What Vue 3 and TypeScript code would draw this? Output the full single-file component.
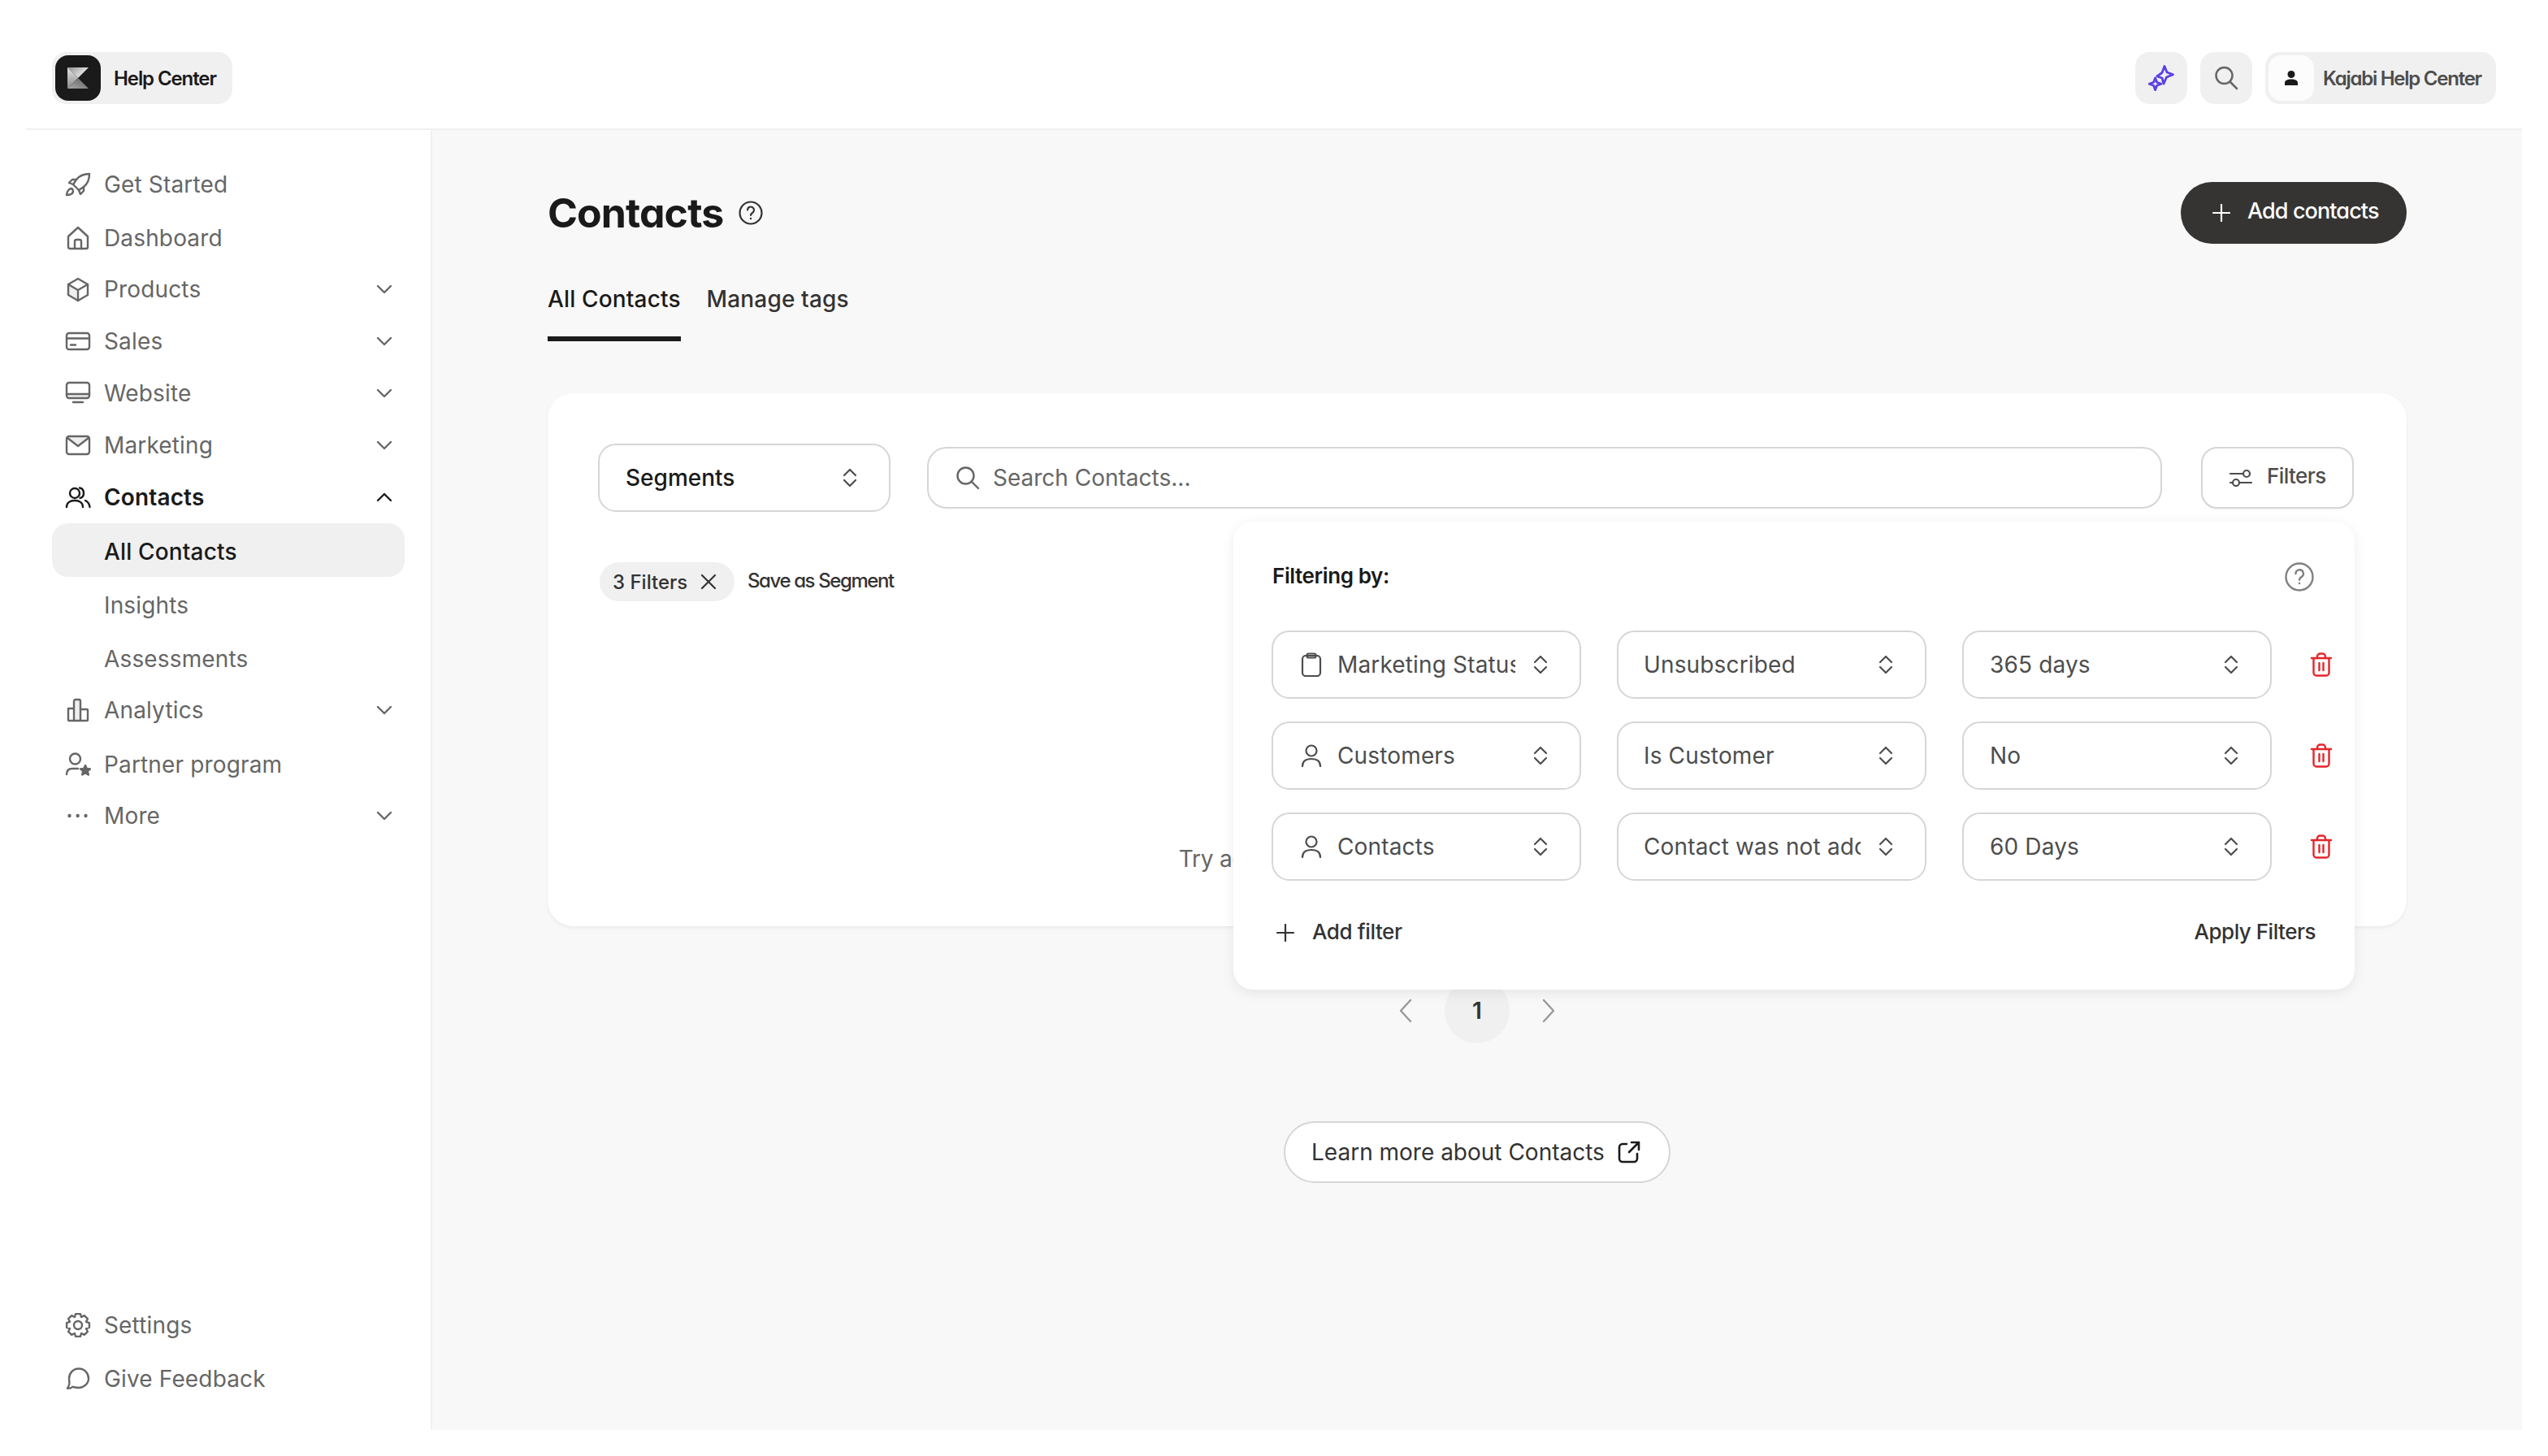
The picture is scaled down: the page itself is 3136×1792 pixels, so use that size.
<script setup lang="ts">
type P = { d: string; fill?: boolean; shade?: boolean }
function gear(): string {
  const c = 16
  const teeth = 8
  let d = ''
  for (let i = 0; i < teeth; i++) {
    const a = (i / teeth) * Math.PI * 2 - Math.PI / 2
    const step = Math.PI / teeth
    const pts: [number, number][] = [
      [10.8, a - step * 0.98],
      [14.2, a - step * 0.52],
      [14.2, a + step * 0.52],
      [10.8, a + step * 0.98],
    ]
    pts.forEach(([r, t], j) => {
      const x = (c + r * Math.cos(t)).toFixed(2)
      const y = (c + r * Math.sin(t)).toFixed(2)
      d += `${i === 0 && j === 0 ? 'M' : 'L'}${x} ${y} `
    })
  }
  return d + 'Z'
}
const icons: Record<string, P[]> = {
  rocket: [
    { d: 'M30 3c-6 0-12 2-16 7l-4 6 7 7 6-4c5-4 7-10 7-16z' },
    { d: 'M14 10H9l-4 4 5 2M23 19v5l-4 4-2-5' },
    { d: 'M7 21c-3 1-5 5-5 8 3 0 7-1 8-4 0-2-1-4-3-4z' },
  ],
  home: [
    { d: 'M4 14 16 3l12 11v13a2 2 0 0 1-2 2H6a2 2 0 0 1-2-2z' },
    { d: 'M12 29V20a2 2 0 0 1 2-2h4a2 2 0 0 1 2 2v9' },
  ],
  cube: [
    { d: 'M4 10 16 17V30L4 23z', shade: true },
    { d: 'M16 3 28 10V23L16 30 4 23V10z' },
    { d: 'M4 10 16 17 28 10M16 17V30' },
  ],
  card: [
    { d: 'M5 6h22a3 3 0 0 1 3 3v14a3 3 0 0 1-3 3H5a3 3 0 0 1-3-3V9a3 3 0 0 1 3-3z' },
    { d: 'M2 12.5H30M7 20.5H13' },
  ],
  monitor: [
    { d: 'M2 17H30V19a3 3 0 0 1-3 3H5a3 3 0 0 1-3-3z', shade: true },
    { d: 'M5 3h22a3 3 0 0 1 3 3v13a3 3 0 0 1-3 3H5a3 3 0 0 1-3-3V6a3 3 0 0 1 3-3z' },
    { d: 'M2 17H30M10 27H22' },
  ],
  mail: [
    { d: 'M3 6H29L16 17z', shade: true },
    { d: 'M5 5h22a3 3 0 0 1 3 3v16a3 3 0 0 1-3 3H5a3 3 0 0 1-3-3V8a3 3 0 0 1 3-3z' },
    { d: 'M3 7 16 17 29 7' },
  ],
  people: [
    { d: 'M18 11a6 6 0 1 1-12 0 6 6 0 0 1 12 0z' },
    { d: 'M2 28c0-5 4-8 10-8s10 3 10 8' },
    { d: 'M18 4.5c3 .5 5 3 5 6.5s-2 5.500-4.500 6M25 20c3 1.500 5 4 5.500 8' },
  ],
  bars: [
    { d: 'M11 5a2 2 0 0 1 2-2h4a2 2 0 0 1 2 2v24h-8z', shade: true },
    { d: 'M4 14h7v15H5a1 1 0 0 1-1-1zM11 5a2 2 0 0 1 2-2h4a2 2 0 0 1 2 2v24h-8zM19 15h8a1 1 0 0 1 1 1v12a1 1 0 0 1-1 1h-8z' },
  ],
  partner: [
    { d: 'M19 9a6.500 6.500 0 1 1-13 0 6.500 6.500 0 0 1 13 0z' },
    { d: 'M2 28c0-5 3-7 7-7h7' },
    { d: 'M25 17l1.800 4 4.200.4-3.200 2.800 1 4.300-3.800-2.300-3.800 2.300 1-4.300-3.200-2.800 4.200-.4z', fill: true },
  ],
  gear: [{ d: gear() }, { d: 'M21 16a5 5 0 1 1-10 0 5 5 0 0 1 10 0z' }],
  chat: [
    { d: 'M17 3.500C24 3.500 29 9 29 15.500 29 22 23 27 17 27c-2.500 0-5-.5-7-1.200C8 27 5 28 3 27.800 4.500 25.500 5.500 23 5.500 20.500 5 19 5 17 5 15.500 5 9 10 3.500 17 3.500z' },
  ],
}
const dots = [5.5, 15.7, 25.5]
interface Nav {
  label: string
  icon?: string
  chev?: 'down' | 'up'
  cls?: string
}
const nav: Nav[] = [
  { label: 'Get Started', icon: 'rocket', cls: 'tall' },
  { label: 'Dashboard', icon: 'home', cls: 'tall' },
  { label: 'Products', icon: 'cube', chev: 'down' },
  { label: 'Sales', icon: 'card', chev: 'down' },
  { label: 'Website', icon: 'monitor', chev: 'down' },
  { label: 'Marketing', icon: 'mail', chev: 'down' },
  { label: 'Contacts', icon: 'people', chev: 'up', cls: 'open' },
  { label: 'All Contacts', cls: 'tall sub current' },
  { label: 'Insights', cls: 'tall sub' },
  { label: 'Assessments', cls: 'tall sub' },
  { label: 'Analytics', icon: 'bars', chev: 'down' },
  { label: 'Partner program', icon: 'partner', cls: 'tall' },
  { label: 'More', icon: 'dots', chev: 'down' },
]
const foot: Nav[] = [
  { label: 'Settings', icon: 'gear', cls: 'tall' },
  { label: 'Give Feedback', icon: 'chat', cls: 'tall' },
]
const rows = [
  { icon: 'clip', a: 'Marketing Status', b: 'Unsubscribed', c: '365 days' },
  { icon: 'user', a: 'Customers', b: 'Is Customer', c: 'No' },
  { icon: 'user', a: 'Contacts', b: 'Contact was not added', c: '60 Days' },
]
</script>

<template>
  <div class="page">
    <header class="top">
      <div class="brand">
        <span class="logo">
          <svg width="26" height="26" viewBox="0 0 26 26">
            <defs>
              <linearGradient id="lgA" x1="0" y1="0" x2="1" y2="0.5">
                <stop offset="0" stop-color="#8f8f8f" />
                <stop offset="1" stop-color="#f2f2f2" />
              </linearGradient>
              <linearGradient id="lgB" x1="0" y1="0" x2="0" y2="1">
                <stop offset="0" stop-color="#e4e4e4" />
                <stop offset="1" stop-color="#8a8a8a" />
              </linearGradient>
              <linearGradient id="lgC" x1="0" y1="1" x2="1" y2="0">
                <stop offset="0" stop-color="#a8a8a8" />
                <stop offset="1" stop-color="#5e5e5e" />
              </linearGradient>
            </defs>
            <path d="M0 0H26L13 13z" fill="url(#lgA)" />
            <path d="M0 0 13 13 0 26z" fill="url(#lgB)" />
            <path d="M0 26 13 13 26 26z" fill="url(#lgC)" />
          </svg>
        </span>
        <span class="brand-name kj">Help Center</span>
      </div>
      <div class="top-right">
        <button class="sq">
          <svg width="32" height="32" viewBox="0 0 32 32" fill="none" stroke="#5b3fe6" stroke-width="2.800" stroke-linejoin="round">
            <path d="M20 1.500 23 9 30.500 11.700 22.500 15 19 23 17 16 10.800 14 17 9.500z" />
            <path d="M8.600 16 10.600 21.300 16 23.300 10.600 25.300 8.600 30.700 6.600 25.300 1.200 23.300 6.600 21.300z" />
          </svg>
        </button>
        <button class="sq">
          <svg width="32" height="32" viewBox="0 0 32 32" fill="none" stroke="#666" stroke-width="2.500" stroke-linecap="round">
            <circle cx="13.500" cy="13" r="10" />
            <path d="M21 21 29 29" />
          </svg>
        </button>
        <div class="user">
          <span class="avatar">
            <svg width="16" height="18" viewBox="0 0 16 18" fill="#1a1a1a">
              <circle cx="8" cy="4.500" r="4.500" />
              <path d="M0 18v-3c0-3 3-4.500 8-4.500s8 1.500 8 4.500v3z" />
            </svg>
          </span>
          <span class="user-name kj">Kajabi Help Center</span>
        </div>
      </div>
    </header>

    <div class="body">
      <aside class="side">
        <nav class="side-list">
          <a v-for="n in nav" :key="n.label" class="item" :class="n.cls">
            <svg v-if="n.icon" class="ico" width="32" height="32" viewBox="0 0 32 32" fill="none" stroke="currentColor" stroke-width="2.400" stroke-linecap="round" stroke-linejoin="round">
              <template v-if="n.icon === 'dots'">
                <circle v-for="x in dots" :key="x" :cx="x" cy="16" r="2.200" fill="currentColor" stroke="none" />
              </template>
              <template v-else>
                <path
                  v-for="(p, i) in icons[n.icon]"
                  :key="i"
                  :d="p.d"
                  :fill="p.fill ? 'currentColor' : p.shade ? '#eeeeee' : 'none'"
                  :stroke="p.shade ? 'none' : 'currentColor'"
                />
              </template>
            </svg>
            <span class="label">{{ n.label }}</span>
            <svg v-if="n.chev" class="chev" width="20" height="12" viewBox="0 0 20 12" fill="none" stroke="currentColor" stroke-width="2.400" stroke-linecap="round" stroke-linejoin="round">
              <path :d="n.chev === 'down' ? 'M2 2 10 10 18 2' : 'M2 10 10 2 18 10'" />
            </svg>
          </a>
        </nav>
        <nav class="side-foot">
          <a v-for="n in foot" :key="n.label" class="item" :class="n.cls">
            <svg class="ico" width="32" height="32" viewBox="0 0 32 32" fill="none" stroke="currentColor" stroke-width="2.400" stroke-linecap="round" stroke-linejoin="round">
              <path v-for="(p, i) in icons[n.icon as string]" :key="i" :d="p.d" />
            </svg>
            <span class="label">{{ n.label }}</span>
          </a>
        </nav>
      </aside>

      <main class="main">
        <div class="title-row">
          <div class="title-wrap">
            <h1 class="title kj">Contacts</h1>
            <svg width="32" height="32" viewBox="0 0 32 32" fill="none" stroke="#333" stroke-width="2.200" stroke-linecap="round">
              <circle cx="16" cy="16" r="13.500" />
              <path d="M12 12.500a4 4 0 1 1 6 3.500c-1.300.8-2 1.400-2 3" />
              <circle cx="16" cy="23" r="1.200" fill="#333" stroke="none" />
            </svg>
          </div>
          <button class="add">
            <svg width="22" height="22" viewBox="0 0 22 22" stroke="#fff" stroke-width="2.200" stroke-linecap="round">
              <path d="M11 1V21M1 11H21" />
            </svg>
            <span class="kj">Add contacts</span>
          </button>
        </div>

        <div class="tabs">
          <span class="tab active">All Contacts</span>
          <span class="tab">Manage tags</span>
        </div>

        <section class="card">
          <div class="toolbar">
            <div class="select seg">
              <span class="sel-text dark">Segments</span>
              <svg width="18" height="24" viewBox="0 0 18 24" fill="none" stroke="#4d4d4d" stroke-width="2.200" stroke-linecap="round" stroke-linejoin="round">
                <path d="M2 9 9 2 16 9M2 15 9 22 16 15" />
              </svg>
            </div>
            <div class="search">
              <svg width="30" height="30" viewBox="0 0 30 30" fill="none" stroke="#666" stroke-width="2.400" stroke-linecap="round">
                <circle cx="12.500" cy="12.500" r="10" />
                <path d="M20 20 28 28" />
              </svg>
              <span class="placeholder">Search Contacts...</span>
            </div>
            <button class="filters">
              <svg width="28" height="22" viewBox="0 0 28 22" fill="none" stroke="#4d4d4d" stroke-width="2.200" stroke-linecap="round">
                <path d="M1 6H16M1 17H4M13 17H27" />
                <circle cx="21" cy="6" r="4" />
                <circle cx="8" cy="17" r="4" />
              </svg>
              <span class="kj">Filters</span>
            </button>
          </div>

          <div class="chips">
            <span class="chip">
              <span class="kj">3 Filters</span>
              <svg width="20" height="20" viewBox="0 0 20 20" stroke="#333" stroke-width="2.200" stroke-linecap="round">
                <path d="M2 2 18 18M18 2 2 18" />
              </svg>
            </span>
            <span class="save kj">Save as Segment</span>
          </div>

          <p class="empty">Try adjusting your search or filters to find your contacts.</p>

          <div class="pop">
            <div class="pop-head">
              <span class="pop-title kj">Filtering by:</span>
              <svg class="pop-help" width="38" height="38" viewBox="0 0 38 38" fill="none" stroke="#808080" stroke-width="2.400" stroke-linecap="round">
                <circle cx="19" cy="19" r="16.500" />
                <path d="M14.500 15a4.700 4.700 0 1 1 7 4.100c-1.500.9-2.500 1.500-2.500 3.400" />
                <circle cx="19" cy="27" r="1.300" fill="#808080" stroke="none" />
              </svg>
            </div>
            <div class="rows">
              <div v-for="r in rows" :key="r.a" class="row">
                <div class="select field">
                  <svg v-if="r.icon === 'clip'" class="f-ico" width="26" height="30" viewBox="0 0 26 30" fill="none" stroke="#4d4d4d" stroke-width="2.200" stroke-linejoin="round">
                    <rect x="2" y="4" width="22" height="25" rx="4" />
                    <rect x="7.500" y="1.500" width="11" height="5" rx="2" />
                  </svg>
                  <svg v-else class="f-ico" width="26" height="28" viewBox="0 0 26 28" fill="none" stroke="#4d4d4d" stroke-width="2.200" stroke-linecap="round">
                    <circle cx="13" cy="8" r="6.500" />
                    <path d="M2 27c0-6 4-9 11-9s11 3 11 9" />
                  </svg>
                  <span class="sel-text clip">{{ r.a }}</span>
                  <svg class="ud" width="18" height="24" viewBox="0 0 18 24" fill="none" stroke="#4d4d4d" stroke-width="2.200" stroke-linecap="round" stroke-linejoin="round">
                    <path d="M2 9 9 2 16 9M2 15 9 22 16 15" />
                  </svg>
                </div>
                <div class="select field">
                  <span class="sel-text clip">{{ r.b }}</span>
                  <svg class="ud" width="18" height="24" viewBox="0 0 18 24" fill="none" stroke="#4d4d4d" stroke-width="2.200" stroke-linecap="round" stroke-linejoin="round">
                    <path d="M2 9 9 2 16 9M2 15 9 22 16 15" />
                  </svg>
                </div>
                <div class="select field last">
                  <span class="sel-text clip">{{ r.c }}</span>
                  <svg class="ud" width="18" height="24" viewBox="0 0 18 24" fill="none" stroke="#4d4d4d" stroke-width="2.200" stroke-linecap="round" stroke-linejoin="round">
                    <path d="M2 9 9 2 16 9M2 15 9 22 16 15" />
                  </svg>
                </div>
                <svg class="trash" width="28" height="30" viewBox="0 0 28 30" fill="none" stroke="#e5252a" stroke-width="2.400" stroke-linecap="round" stroke-linejoin="round">
                  <path d="M2 7H26M4.500 7V25a3.500 3.500 0 0 0 3.500 3.500H20a3.500 3.500 0 0 0 3.500-3.500V7" />
                  <path d="M9 7V5a3.500 3.500 0 0 1 3.500-3.500h3A3.500 3.500 0 0 1 19 5v2" />
                  <path d="M11.500 13V22M16.500 13V22" />
                </svg>
              </div>
            </div>
            <div class="pop-foot">
              <span class="add-filter">
                <svg width="22" height="22" viewBox="0 0 22 22" stroke="#333" stroke-width="2.200" stroke-linecap="round">
                  <path d="M11 1V21M1 11H21" />
                </svg>
                <span class="kj">Add filter</span>
              </span>
              <span class="apply kj">Apply Filters</span>
            </div>
          </div>
        </section>

        <div class="pager">
          <svg width="16" height="30" viewBox="0 0 16 30" fill="none" stroke="#999" stroke-width="2.400" stroke-linecap="round" stroke-linejoin="round">
            <path d="M14 2 2 15 14 28" />
          </svg>
          <span class="page-no">1</span>
          <svg width="16" height="30" viewBox="0 0 16 30" fill="none" stroke="#999" stroke-width="2.400" stroke-linecap="round" stroke-linejoin="round">
            <path d="M2 2 14 15 2 28" />
          </svg>
        </div>

        <div class="learn-wrap">
          <a class="learn">
            <span>Learn more about Contacts</span>
            <svg width="28" height="28" viewBox="0 0 28 28" fill="none" stroke="#1a1a1a" stroke-width="2.600" stroke-linecap="round" stroke-linejoin="round">
              <path d="M11 4H6a4 4 0 0 0-4 4v14a4 4 0 0 0 4 4h14a4 4 0 0 0 4-4v-6" />
              <path d="M14 14 26 2M17 2H26V11" />
            </svg>
          </a>
        </div>
      </main>
    </div>
  </div>
</template>

<style>
html,
body {
  margin: 0;
  background: #fff;
}
</style>

<style scoped>
.page {
  box-sizing: border-box;
  width: 3136px;
  height: 1792px;
  padding: 0 32px 32px;
  display: flex;
  flex-direction: column;
  font-family: Inter, "Liberation Sans", sans-serif;
  color: #1a1a1a;
  overflow: hidden;
}
.kj {
  font-feature-settings: "cv11" 1;
}
.top {
  flex: none;
  box-sizing: border-box;
  height: 160px;
  border-bottom: 2px solid #f0f0f0;
  padding: 64px 32px 0;
  display: flex;
  align-items: flex-start;
  justify-content: space-between;
}
.brand {
  width: 222px;
  height: 64px;
  box-sizing: border-box;
  padding: 4px;
  background: #f0f0f0;
  border-radius: 18px;
  display: flex;
  align-items: center;
  gap: 16px;
}
.logo {
  width: 56px;
  height: 56px;
  border-radius: 16px;
  background: #1a1a1a;
  display: flex;
  align-items: center;
  justify-content: center;
}
.brand-name {
  font-size: 24px;
  font-weight: 600;
  letter-spacing: -1.1px;
  white-space: nowrap;
}
.top-right {
  display: flex;
  gap: 16px;
}
.sq {
  width: 64px;
  height: 64px;
  border: 0;
  padding: 0;
  background: #f0f0f0;
  border-radius: 18px;
  display: flex;
  align-items: center;
  justify-content: center;
}
.user {
  height: 64px;
  width: 284px;
  box-sizing: border-box;
  padding: 4px;
  background: #f0f0f0;
  border-radius: 18px;
  display: flex;
  align-items: center;
  gap: 11px;
}
.avatar {
  width: 56px;
  height: 56px;
  background: #fcfcfc;
  border-radius: 16px;
  display: flex;
  align-items: center;
  justify-content: center;
}
.user-name {
  font-size: 24px;
  font-weight: 600;
  color: #4d4d4d;
  letter-spacing: -1.25px;
  white-space: nowrap;
}
.body {
  flex: 1;
  display: flex;
  min-height: 0;
}
.side {
  flex: none;
  width: 500px;
  box-sizing: border-box;
  border-right: 2px solid #f0f0f0;
  padding: 32px 32px 32px 32px;
  display: flex;
  flex-direction: column;
  justify-content: space-between;
}
.item {
  height: 64px;
  box-sizing: border-box;
  padding: 0 15px 0 16px;
  display: flex;
  align-items: center;
  font-size: 28px;
  letter-spacing: 0.15px;
  color: #666;
  border-radius: 20px;
  width: 434px;
}
.item.tall {
  height: 66px;
  padding-top: 3px;
}
.item.open {
  color: #1a1a1a;
  font-weight: 600;
}
.item.open .chev {
  color: #1a1a1a;
}
.item.sub {
  padding-left: 64px;
}
.item.current {
  background: #f0f0f0;
  color: #1a1a1a;
  font-weight: 500;
}
.ico {
  flex: none;
  margin-right: 16px;
}
.label {
  flex: 1;
  white-space: nowrap;
}
.chev {
  flex: none;
}
.main {
  flex: 1;
  background: #f8f8f8;
  padding: 64px 142px 0;
  min-width: 0;
  box-sizing: border-box;
}
.title-row {
  height: 76px;
  display: flex;
  align-items: center;
  justify-content: space-between;
}
.title-wrap {
  display: flex;
  align-items: center;
  gap: 18px;
}
.title {
  margin: 0;
  font-size: 50px;
  font-weight: 700;
  line-height: 76px;
  letter-spacing: -0.9px;
  color: #1a1a1a;
}
.add {
  width: 278px;
  height: 76px;
  border: 0;
  padding: 0 0 0 39px;
  background: #353433;
  border-radius: 38px;
  display: flex;
  align-items: center;
  gap: 21px;
  color: #fff;
  font: 500 27px Inter, sans-serif;
  letter-spacing: -0.9px;
}
.add span {
  position: relative;
  top: -3px;
}
.tabs {
  display: flex;
  gap: 32px;
  margin-top: 46px;
}
.tab {
  font-size: 28px;
  font-weight: 500;
  letter-spacing: 0.15px;
  line-height: 44px;
  padding-bottom: 24px;
  border-bottom: 6px solid transparent;
  color: #333;
}
.tab.active {
  color: #1a1a1a;
  border-bottom-color: #1a1a1a;
}
.card {
  position: relative;
  margin-top: 64px;
  box-sizing: border-box;
  height: 656px;
  background: #fff;
  border-radius: 32px;
  padding: 62px 65px 0 62px;
  box-shadow: 0 2px 4px rgba(0, 0, 0, 0.06);
}
.toolbar {
  display: flex;
  align-items: center;
}
.select {
  box-sizing: border-box;
  border: 2px solid #d6d6d6;
  background: #fff;
  border-radius: 22px;
  display: flex;
  align-items: center;
}
.seg {
  width: 360px;
  height: 84px;
  padding: 0 39px 0 32px;
  justify-content: space-between;
}
.sel-text {
  font-size: 28px;
  letter-spacing: 0.15px;
  color: #4d4d4d;
  white-space: nowrap;
}
.sel-text.dark {
  color: #1a1a1a;
  font-weight: 500;
  letter-spacing: 0;
}
.search {
  box-sizing: border-box;
  flex: 1;
  height: 76px;
  margin-left: 45px;
  border: 2px solid #d6d6d6;
  border-radius: 24px;
  background: #fff;
  padding: 0 0 0 33px;
  display: flex;
  align-items: center;
  gap: 16px;
}
.placeholder {
  font-size: 28px;
  color: #666;
}
.filters {
  box-sizing: border-box;
  width: 188px;
  height: 76px;
  margin-left: 48px;
  border: 2px solid #d6d6d6;
  border-radius: 20px;
  background: #fff;
  padding: 0 0 0 33px;
  display: flex;
  align-items: center;
  gap: 18px;
  font: 500 26px Inter, sans-serif;
  letter-spacing: -0.6px;
  color: #4d4d4d;
  box-shadow: 0 1px 2px rgba(0, 0, 0, 0.06);
}
.filters span {
  position: relative;
  top: -3px;
}
.chips {
  margin-top: 62px;
  margin-left: 2px;
  display: flex;
  align-items: center;
  gap: 16px;
}
.chip {
  box-sizing: border-box;
  width: 166px;
  height: 48px;
  padding: 0 0 0 16px;
  background: #f0f0f0;
  border-radius: 24px;
  display: flex;
  align-items: center;
  gap: 16px;
  font-size: 24px;
  font-weight: 500;
  color: #333;
  white-space: nowrap;
}
.save {
  font-size: 24px;
  font-weight: 500;
  color: #333;
  letter-spacing: -1.4px;
  position: relative;
  top: -2px;
}
.empty {
  margin: 297px 0 0;
  font-size: 28px;
  letter-spacing: -0.2px;
  line-height: 40px;
  color: #666;
  text-align: center;
  white-space: nowrap;
}
.pop {
  position: absolute;
  left: 844px;
  top: 158px;
  width: 1380px;
  height: 576px;
  box-sizing: border-box;
  background: #fff;
  border-radius: 24px;
  padding: 0 0 0 47px;
  box-shadow: 0 4px 16px rgba(0, 0, 0, 0.08);
}
.pop-head {
  height: 134px;
  padding: 0 49px 0 1px;
  display: flex;
  align-items: center;
  justify-content: space-between;
}
.pop-help {
  position: relative;
  top: 1px;
}
.pop-title {
  font-size: 26px;
  font-weight: 600;
  letter-spacing: -0.4px;
  color: #1a1a1a;
  position: relative;
  top: -1px;
}
.rows {
  display: flex;
  flex-direction: column;
  gap: 28px;
}
.row {
  display: flex;
  align-items: center;
  gap: 44px;
}
.field {
  width: 381px;
  height: 84px;
  padding: 0 39px 0 31px;
  flex: none;
}
.field.last {
  padding-left: 32px;
}
.f-ico {
  flex: none;
  margin-right: 19px;
  margin-left: 3px;
}
.clip {
  flex: 1;
  min-width: 0;
  overflow: hidden;
  margin-right: 22px;
}
.ud {
  flex: none;
}
.trash {
  flex: none;
  margin-left: 3px;
}
.pop-foot {
  margin-top: 32px;
  height: 64px;
  padding: 0 48px 0 6px;
  display: flex;
  align-items: center;
  justify-content: space-between;
}
.add-filter {
  display: flex;
  align-items: center;
  gap: 22px;
  font-size: 26px;
  font-weight: 500;
  color: #333;
}
.add-filter span {
  position: relative;
  top: -2px;
  letter-spacing: -0.4px;
}
.apply {
  font-size: 26px;
  font-weight: 500;
  color: #333;
  letter-spacing: -0.5px;
  position: relative;
  top: -2px;
}
.pager {
  margin-top: 64px;
  display: flex;
  align-items: center;
  justify-content: center;
  gap: 40px;
}
.page-no {
  width: 80px;
  height: 80px;
  border-radius: 50%;
  background: #f0f0f0;
  display: flex;
  align-items: center;
  justify-content: center;
  font-size: 28px;
  font-weight: 600;
  color: #333;
}
.learn-wrap {
  margin-top: 96px;
  display: flex;
  justify-content: center;
}
.learn {
  box-sizing: border-box;
  width: 476px;
  height: 76px;
  border: 2px solid #d6d6d6;
  border-radius: 38px;
  background: #fff;
  padding: 0 0 0 32px;
  display: flex;
  align-items: center;
  gap: 16px;
  font-size: 28px;
  color: #333;
  white-space: nowrap;
}
</style>
